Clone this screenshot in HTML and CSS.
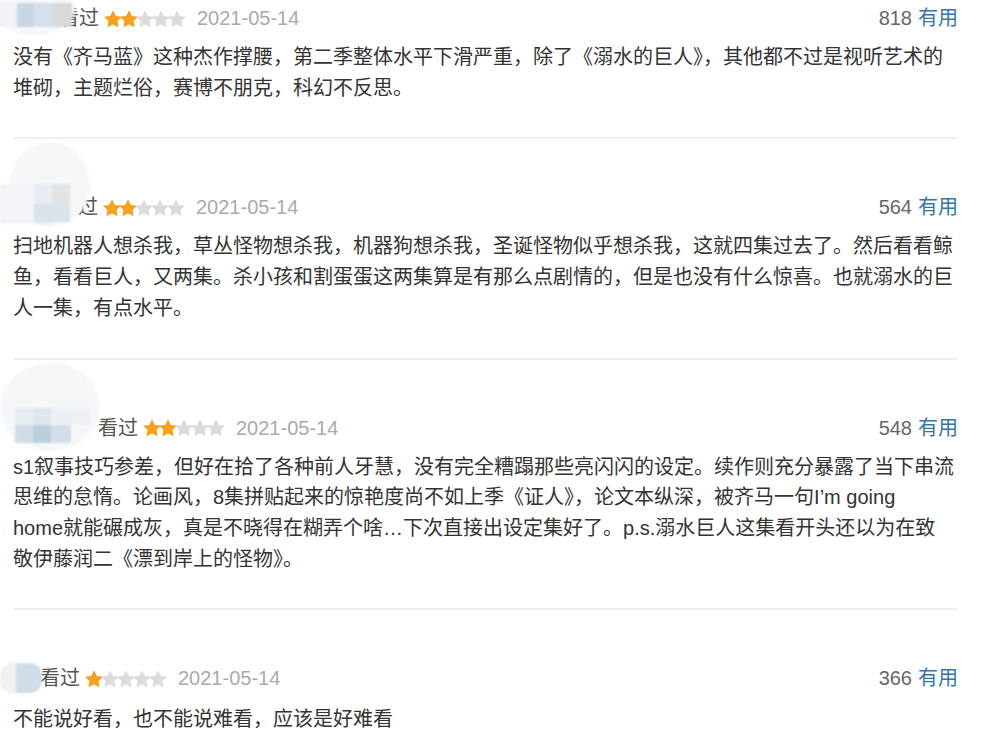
FILE: index.html
```html
<!DOCTYPE html>
<html lang="zh-CN">
<head>
  <meta charset="UTF-8">
  <title>短评</title>
  <link rel="stylesheet" href="styles.css">
</head>
<body>
  <svg width="0" height="0" class="defs">
    <symbol id="star" viewBox="0 0 20 20">
      <polygon points="10,0.3 13.1,6.6 20,7.4 15,12.3 16.2,19.3 10,16 3.8,19.3 5,12.3 0,7.4 6.9,6.6"/>
    </symbol>
  </svg>

  <div class="comments">
    <!-- 短评 1 -->
    <div class="comment-item">
      <div class="mask mask-1">
        <span class="blob"></span>
        <span class="tile t-a"></span><span class="tile t-b"></span><span class="tile t-c"></span><span class="tile t-d"></span>
      </div>
      <h3 class="comment-info">
        <span class="user u-1"></span>
        <span class="status">看过</span>
        <span class="stars">
          <svg class="on"><use href="#star"/></svg><svg class="on"><use href="#star"/></svg><svg><use href="#star"/></svg><svg><use href="#star"/></svg><svg><use href="#star"/></svg>
        </span>
        <span class="time">2021-05-14</span>
        <span class="votes"><span class="count">818</span><a class="useful">有用</a></span>
      </h3>
      <p class="short">没有《齐马蓝》这种杰作撑腰，第二季整体水平下滑严重，除了《溺水的巨人》，其他都不过是视听艺术的堆砌，主题烂俗，赛博不朋克，科幻不反思。</p>
    </div>

    <!-- 短评 2 -->
    <div class="comment-item">
      <div class="mask mask-2">
        <span class="blob"></span>
        <span class="tile t-a"></span><span class="tile t-b"></span><span class="tile t-c"></span><span class="tile t-d"></span>
      </div>
      <h3 class="comment-info">
        <span class="user u-2"></span>
        <span class="status">看过</span>
        <span class="stars">
          <svg class="on"><use href="#star"/></svg><svg class="on"><use href="#star"/></svg><svg><use href="#star"/></svg><svg><use href="#star"/></svg><svg><use href="#star"/></svg>
        </span>
        <span class="time">2021-05-14</span>
        <span class="votes"><span class="count">564</span><a class="useful">有用</a></span>
      </h3>
      <p class="short">扫地机器人想杀我，草丛怪物想杀我，机器狗想杀我，圣诞怪物似乎想杀我，这就四集过去了。然后看看鲸鱼，看看巨人，又两集。杀小孩和割蛋蛋这两集算是有那么点剧情的，但是也没有什么惊喜。也就溺水的巨人一集，有点水平。</p>
    </div>

    <!-- 短评 3 -->
    <div class="comment-item">
      <div class="mask mask-3">
        <span class="blob"></span>
        <span class="tile t-a"></span><span class="tile t-b"></span><span class="tile t-c"></span><span class="tile t-d"></span><span class="tile t-e"></span><span class="tile t-f"></span>
      </div>
      <h3 class="comment-info">
        <span class="user u-3"><i class="peek">j</i></span>
        <span class="status">看过</span>
        <span class="stars">
          <svg class="on"><use href="#star"/></svg><svg class="on"><use href="#star"/></svg><svg><use href="#star"/></svg><svg><use href="#star"/></svg><svg><use href="#star"/></svg>
        </span>
        <span class="time">2021-05-14</span>
        <span class="votes"><span class="count">548</span><a class="useful">有用</a></span>
      </h3>
      <p class="short">s1叙事技巧参差，但好在拾了各种前人牙慧，没有完全糟蹋那些亮闪闪的设定。续作则充分暴露了当下串流思维的怠惰。论画风，8集拼贴起来的惊艳度尚不如上季《证人》，论文本纵深，被齐马一句I’m going<br>home就能碾成灰，真是不晓得在糊弄个啥…下次直接出设定集好了。p.s.溺水巨人这集看开头还以为在致<br>敬伊藤润二《漂到岸上的怪物》。</p>
    </div>

    <!-- 短评 4 -->
    <div class="comment-item">
      <div class="mask mask-4">
        <span class="tile t-a"></span><span class="tile t-b"></span>
      </div>
      <h3 class="comment-info">
        <span class="user u-4"></span>
        <span class="status">看过</span>
        <span class="stars">
          <svg class="on"><use href="#star"/></svg><svg><use href="#star"/></svg><svg><use href="#star"/></svg><svg><use href="#star"/></svg><svg><use href="#star"/></svg>
        </span>
        <span class="time">2021-05-14</span>
        <span class="votes"><span class="count">366</span><a class="useful">有用</a></span>
      </h3>
      <p class="short last">不能说好看，也不能说难看，应该是好难看</p>
    </div>
  </div>
</body>
</html>
```

FILE: styles.css
```css
body {
  margin: 0;
  background-color: #fff;
  font-family: "Liberation Sans", Arial, "Noto Sans CJK SC", sans-serif;
  color: #333;
}
.defs {
  position: absolute;
}
.comments {
  width: 945px;
  padding: 3px 0 0 13px;
}
.comment-item {
  position: relative;
  padding-bottom: 34px;
  margin-bottom: 53px;
  border-bottom: 2px solid #efefef;
}
.comment-item:last-child {
  border-bottom: none;
  margin-bottom: 0;
}
.comment-info {
  display: flex;
  align-items: center;
  height: 31px;
  margin: 0;
  font-size: 20px;
  font-weight: normal;
  line-height: 31px;
}
.user {
  display: inline-block;
  height: 20px;
}
.user.u-1 { width: 46px; }
.user.u-2 { width: 45px; }
.user.u-3 { width: 85px; }
.user.u-4 { width: 27px; }
.peek {
  display: inline-block;
  margin-left: 54px;
  font-style: normal;
  color: #37a;
  line-height: 20px;
}
.status {
  color: #555;
}
.stars {
  display: flex;
  margin: 0 13px 0 5px;
}
.stars svg {
  width: 18px;
  height: 18px;
  margin-right: -2px;
  fill: #dcdcdc;
}
.stars svg.on {
  fill: #f7a01c;
}
.time {
  color: #aaa;
}
.votes {
  margin-left: auto;
  display: flex;
  gap: 6px;
}
.count {
  color: #666;
}
.useful {
  color: #37a;
  cursor: pointer;
}
.short {
  margin: 8px 0 0;
  font-size: 20px;
  line-height: 30.7px;
  color: #333;
  word-break: break-all;
}
.short.last {
  margin-top: 10px;
}

/* 头像/昵称打码 */
.mask {
  position: absolute;
  filter: blur(1.2px);
  pointer-events: none;
}
.mask .blob {
  position: absolute;
  border-radius: 50%;
  background-color: #f6f7f8;
}
.mask .tile {
  position: absolute;
}
.mask-1 { left: -13px; top: -3px; width: 80px; height: 40px; }
.mask-1 .blob { left: -10px; top: -20px; width: 85px; height: 55px; }
.mask-1 .t-a { left: 0; top: 3px; width: 17px; height: 24px; background: #f1f3f6; }
.mask-1 .t-b { left: 17px; top: 3px; width: 17px; height: 24px; background: #c9d7e3; }
.mask-1 .t-c { left: 34px; top: 3px; width: 19px; height: 24px; background: #d4e0ea; }
.mask-1 .t-d { left: 53px; top: 3px; width: 19px; height: 24px; background: #d9d9da; }

.mask-2 { left: -13px; top: -50px; width: 95px; height: 95px; }
.mask-2 .blob { left: 10px; top: 0; width: 80px; height: 85px; }
.mask-2 .t-a { left: 0; top: 42px; width: 34px; height: 40px; background: #f2f4f7; }
.mask-2 .t-b { left: 34px; top: 42px; width: 18px; height: 40px; background: #e7edf3; }
.mask-2 .t-c { left: 52px; top: 42px; width: 18px; height: 20px; background: #e3e3e4; }
.mask-2 .t-d { left: 34px; top: 62px; width: 36px; height: 18px; background: #d8e3ec; }

.mask-3 { left: -13px; top: -50px; width: 105px; height: 90px; }
.mask-3 .blob { left: 0; top: 0; width: 100px; height: 88px; }
.mask-3 .t-a { left: 15px; top: 45px; width: 18px; height: 17px; background: #e6ecf2; }
.mask-3 .t-b { left: 33px; top: 45px; width: 18px; height: 17px; background: #dfe6ed; }
.mask-3 .t-c { left: 51px; top: 45px; width: 40px; height: 17px; background: #edf1f5; }
.mask-3 .t-d { left: 15px; top: 62px; width: 18px; height: 18px; background: #d0dce7; }
.mask-3 .t-e { left: 33px; top: 62px; width: 18px; height: 18px; background: #bccfdf; }
.mask-3 .t-f { left: 51px; top: 62px; width: 20px; height: 18px; background: #d3deea; }

.mask-4 { left: -13px; top: 0; width: 42px; height: 30px; border-radius: 12px; overflow: hidden; }
.mask-4 .t-a { left: 0; top: 0; width: 16px; height: 30px; background: #f1f1f2; }
.mask-4 .t-b { left: 16px; top: 0; width: 26px; height: 30px; background: #cfdde9; }
```
